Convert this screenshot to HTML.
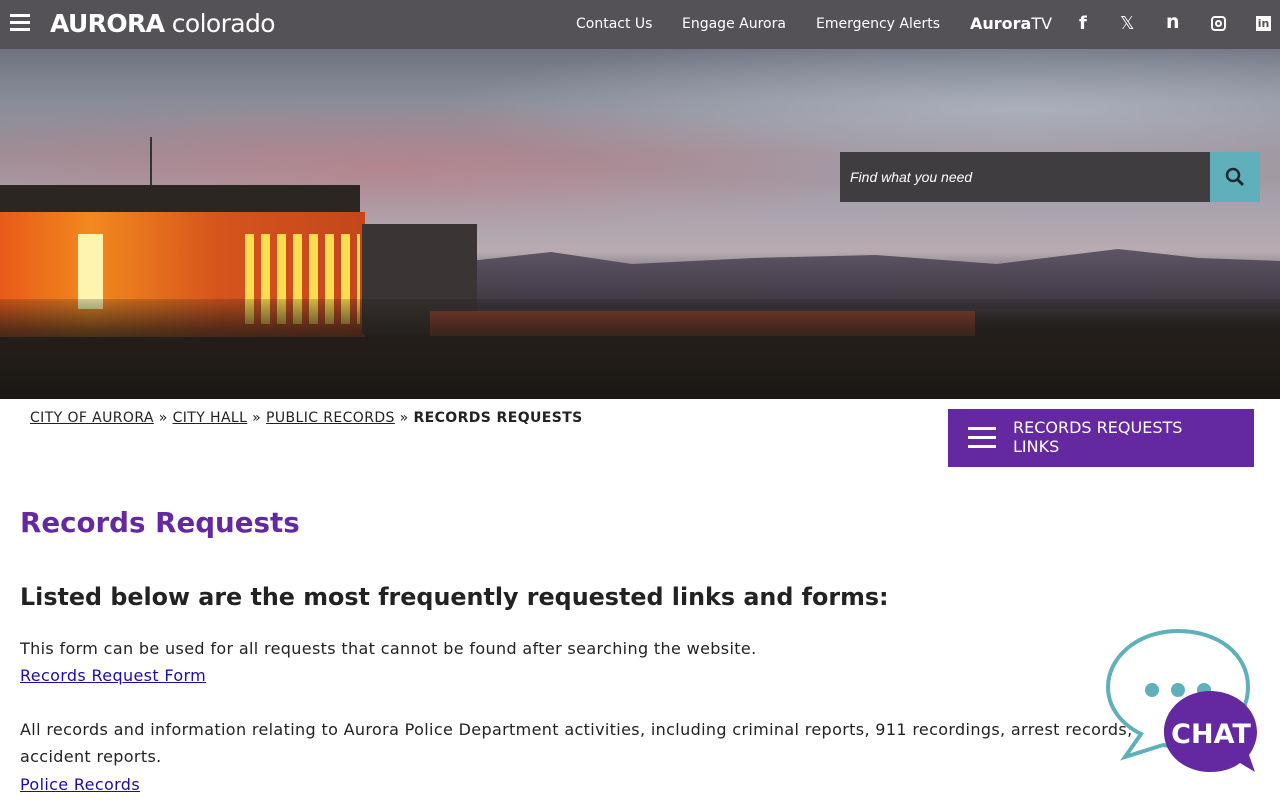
<!DOCTYPE html>
<html><head><meta charset="utf-8"><style>
*{margin:0;padding:0;box-sizing:border-box}
body{width:1280px;height:800px;overflow:hidden;font-family:"DejaVu Sans","Liberation Sans",sans-serif;background:#fff;color:#222;position:relative}
.hdr{height:49px;background:#545257;position:relative;color:#fff}
.hdr .burger{position:absolute;left:10px;top:14px;width:20px}
.hdr .burger i{display:block;height:3px;background:#fff;margin-bottom:4px}
.logo{position:absolute;left:50px;top:9px;font-size:25px;letter-spacing:-0.6px}
.logo b{font-weight:bold}
.nav{position:absolute;top:16px;font-size:14px}
.hero{position:absolute;top:49px;left:0;width:1280px;height:350px;overflow:hidden;
background:linear-gradient(180deg,#6d7380 0%,#8a8d99 15%,#9c8f98 30%,#a9a3ad 45%,#b8aab0 58%,#6f6a78 66%,#4a4550 72%,#2c2826 80%,#1c1a18 100%)}
.search{position:absolute;left:840px;top:152px;width:370px;height:50px;background:#3f3d40;color:#fff;font-style:italic;font-size:14px;padding:17px 10px;font-family:"Liberation Sans",sans-serif}
.sbtn{position:absolute;left:1210px;top:152px;width:50px;height:50px;background:#5fb0bb}
.bc{position:absolute;left:30px;top:410px;font-size:14px;letter-spacing:0.4px}
.bc a{color:#222;text-decoration:underline}
.rbtn{position:absolute;left:948px;top:409px;width:306px;height:58px;background:#6428a0;color:#fff;font-size:16px;padding:9px 0 0 65px;line-height:19px}
h1{position:absolute;left:20px;top:506px;font-size:27.7px;color:#6428a0;font-weight:bold}
h2{position:absolute;left:20px;top:583px;font-size:23.8px;font-weight:bold;color:#222}
.p{position:absolute;left:20px;font-size:16px;color:#222;letter-spacing:0.35px}
.p a{color:#1a0dab}
</style></head><body>
<div class="hdr">
<div class="burger"><i></i><i></i><i></i></div>
<div class="logo"><b>AURORA</b> colorado</div>
<div class="nav" style="left:576px">Contact Us</div>
<div class="nav" style="left:682px">Engage Aurora</div>
<div class="nav" style="left:816px">Emergency Alerts</div>
<div class="nav" style="left:970px;top:14px;font-weight:bold;font-size:16px">Aurora<span style="font-weight:normal">TV</span></div>
<div class="nav" style="left:1079px;top:13px;font-size:18px;font-weight:bold">f</div>
<div class="nav" style="left:1120px;top:13px;font-size:18px">𝕏</div>
<div class="nav" style="left:1166px;top:11px;font-size:19px;font-weight:bold">n</div>
<div style="position:absolute;left:1211px;top:16px;width:15px;height:15px;border:2px solid #fff;border-radius:4px"><div style="width:7px;height:7px;border:2px solid #fff;border-radius:50%;margin:2px"></div></div>
<div style="position:absolute;left:1256px;top:16px;width:15px;height:15px;background:#fff;color:#545257;font-size:11px;font-weight:bold;text-align:center;line-height:15px">in</div>
</div>
<div class="hero">
<div style="position:absolute;left:0;top:0;width:1280px;height:200px;background:radial-gradient(ellipse at 30% 60%,rgba(200,120,130,.5),transparent 40%),radial-gradient(ellipse at 80% 30%,rgba(200,210,220,.5),transparent 40%)"></div>
<div style="position:absolute;left:470px;top:200px;width:810px;height:60px;background:linear-gradient(180deg,#5e5566,#3c3640);clip-path:polygon(0 20%,10% 5%,20% 25%,35% 15%,50% 10%,65% 25%,80% 0,90% 15%,100% 20%,100% 100%,0 100%)"></div>
<div style="position:absolute;left:150px;top:88px;width:2px;height:50px;background:#333"></div>
<div style="position:absolute;left:0;top:136px;width:360px;height:28px;background:#2b2622"></div>
<div style="position:absolute;left:0;top:163px;width:365px;height:125px;background:linear-gradient(90deg,#e85a1a,#f2891e 25%,#d6541c 60%,#c4461a)"></div>
<div style="position:absolute;left:78px;top:185px;width:25px;height:75px;background:#fff3b0"></div>
<div style="position:absolute;left:245px;top:185px;width:115px;height:90px;background:repeating-linear-gradient(90deg,#ffdd50 0 9px,transparent 9px 16px)"></div>
<div style="position:absolute;left:362px;top:175px;width:115px;height:110px;background:#3a3534"></div>
<div style="position:absolute;left:430px;top:262px;width:545px;height:25px;background:#9a4630"></div>
<div style="position:absolute;left:0;top:250px;width:1280px;height:100px;background:linear-gradient(180deg,rgba(30,26,22,.2),rgba(30,26,22,.7) 30%,#221d19 55%,#1a1714)"></div>
</div>
<div class="search">Find what you need</div>
<div class="sbtn"><svg width="50" height="50"><circle cx="23" cy="23" r="6" stroke="#1c2a30" stroke-width="2.5" fill="none"/><line x1="27.5" y1="27.5" x2="33" y2="33" stroke="#1c2a30" stroke-width="3"/></svg></div>
<div class="bc"><a>CITY OF AURORA</a> » <a>CITY HALL</a> » <a>PUBLIC RECORDS</a> » <b>RECORDS REQUESTS</b></div>
<div class="rbtn"><div style="position:absolute;left:20px;top:18px;width:28px"><div style="height:3px;background:#fff;margin-bottom:6px"></div><div style="height:3px;background:#fff;margin-bottom:6px"></div><div style="height:3px;background:#fff"></div></div>RECORDS REQUESTS<br>LINKS</div>
<h1>Records Requests</h1>
<h2>Listed below are the most frequently requested links and forms:</h2>
<div class="p" style="top:639px">This form can be used for all requests that cannot be found after searching the website.</div>
<div class="p" style="top:666px"><a href="#">Records Request Form</a></div>
<div class="p" style="top:720px">All records and information relating to Aurora Police Department activities, including criminal reports, 911 recordings, arrest records,</div>
<div class="p" style="top:747px">accident reports.</div>
<div class="p" style="top:775px"><a href="#">Police Records</a></div>
<svg style="position:absolute;left:1100px;top:625px" width="170" height="155">
<path d="M78 6C38 6 8 32 8 62c0 20 13 37 33 47l-16 23 38-12c6 1 10 2 15 2 40 0 70-27 70-60S118 6 78 6z" fill="#fff" stroke="#5fb0bb" stroke-width="4"/>
<circle cx="52" cy="65" r="7" fill="#5fb0bb"/><circle cx="78" cy="65" r="7" fill="#5fb0bb"/><circle cx="104" cy="65" r="7" fill="#5fb0bb"/>
<path d="M110 66c-25 0-46 18-46 41s21 40 46 40c12 0 22-3 30-9l15 9-6-17c5-7 8-15 8-23 0-23-21-41-47-41z" fill="#6428a0"/>
<text x="111" y="118" font-family="DejaVu Sans" font-weight="bold" font-size="27" fill="#fff" text-anchor="middle">CHAT</text>
</svg>
</body></html>
